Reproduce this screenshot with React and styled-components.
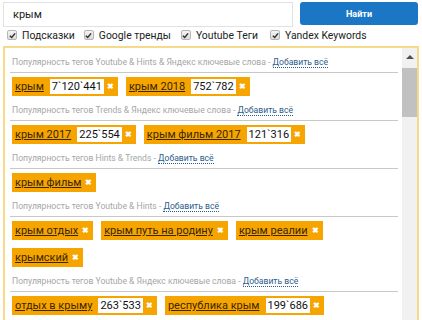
import React from "react"
import styled, { createGlobalStyle } from "styled-components"

const GlobalStyle = createGlobalStyle`
    body {
        margin: 0;
        background: #fff;
        font-family: Roboto, "Liberation Sans", sans-serif;
        overflow: hidden;
    }
`

const Page = styled.div`
    width: 422px;
    height: 320px;
    overflow: hidden;
`

const SearchBar = styled.div`
    display: flex;
    align-items: flex-start;
    padding: 2px 4px 0 3px;
    gap: 7px;
`

const SearchInput = styled.div`
    flex: 1;
    height: 23px;
    border: 1px solid #e2e2e2;
    box-sizing: content-box;
    display: flex;
    align-items: center;
    padding-left: 9px;
    font-size: 11px;
    color: #222;
`

const SearchButton = styled.button`
    width: 118px;
    height: 23px;
    border: none;
    border-radius: 3px;
    background: #1b77c5;
    color: #fff;
    font-family: Roboto, "Liberation Sans", sans-serif;
    font-weight: bold;
    font-size: 9px;
    padding: 0;
`

const Options = styled.div`
    display: flex;
    align-items: center;
    height: 14px;
    margin-top: 1px;
    padding-left: 7px;
    font-size: 10.4px;
    color: #222;
    white-space: nowrap;
`

const Option = styled.label`
    display: flex;
    align-items: center;
    margin-right: ${props => props.gap || 9}px;
`

const Box = styled.span`
    width: 8px;
    height: 8px;
    border: 1px solid #b5b5b5;
    border-radius: 2px;
    background: linear-gradient(#f4f4f4, #dcdcdc);
    display: inline-flex;
    align-items: center;
    justify-content: center;
    margin-right: 5px;
`

const Panel = styled.div`
    margin: 4px 3px 0 3px;
    border: 2px solid #f7d98a;
    display: flex;
    height: 300px;
`

const Content = styled.div`
    flex: 1;
    padding: 7px 4px 0 5px;
`

const Scrollbar = styled.div`
    width: 15px;
    background: #f1f1f1;
    display: flex;
    flex-direction: column;
    align-items: center;
`

const ScrollArrow = styled.div`
    width: 0;
    height: 0;
    border-left: 4px solid transparent;
    border-right: 4px solid transparent;
    border-bottom: 4px solid #505050;
    margin-top: 7px;
`

const Thumb = styled.div`
    width: 15px;
    height: 49px;
    margin-top: 9px;
    background: #c1c1c1;
`

const SectionHeader = styled.div`
    font-size: 8.6px;
    line-height: 14px;
    color: #a6a6a6;
    padding: 0 0 3px 2px;
    border-bottom: 1px solid #c8c8c8;
    white-space: nowrap;
`

const AddAll = styled.span`
    color: #2b5d8a;
    border-bottom: 1px dotted #2b5d8a;
`

const Tags = styled.div`
    display: flex;
    flex-wrap: wrap;
    gap: 8px 8px;
    padding: 4px 0 7px 2px;
`

const Tag = styled.div`
    height: 19px;
    display: flex;
    align-items: center;
    background: #f6a500;
    padding: 0 4px 0 3px;
    font-size: 11px;
`

const TagText = styled.span`
    color: #3a2600;
    text-decoration: underline;
    margin-right: ${props => props.hasCount ? 6 : 4}px;
`

const Count = styled.span`
    background: #fff;
    color: #111;
    height: 15px;
    line-height: 15px;
    padding: 0 2px;
    margin-right: 3px;
`

const Remove = styled.span`
    color: #fff;
    font-weight: bold;
    font-size: 8px;
    line-height: 1;
`

const sections = [
    {
        title: "Популярность тегов Youtube & Hints & Яндекс ключевые слова",
        tags: [["крым", "7`120`441"], ["крым 2018", "752`782"]],
    },
    {
        title: "Популярность тегов Trends & Яндекс ключевые слова",
        tags: [["крым 2017", "225`554"], ["крым фильм 2017", "121`316"]],
    },
    {
        title: "Популярность тегов Hints & Trends",
        tags: [["крым фильм"]],
    },
    {
        title: "Популярность тегов Youtube & Hints",
        tags: [["крым отдых"], ["крым путь на родину"], ["крым реалии"], ["крымский"]],
    },
    {
        title: "Популярность тегов Youtube & Яндекс ключевые слова",
        tags: [["отдых в крыму", "263`533"], ["республика крым", "199`686"]],
    },
]

const Check = () => (
    <Box>
        <svg width="7" height="7" viewBox="0 0 8 8">
            <path d="M1 4.2 L3.1 6.3 L7 1.6" fill="none" stroke="#333" strokeWidth="1.7" />
        </svg>
    </Box>
)

const App = () => {
    return (
        <Page>
            <GlobalStyle />
            <SearchBar>
                <SearchInput>крым</SearchInput>
                <SearchButton>Найти</SearchButton>
            </SearchBar>
            <Options>
                <Option gap={9}><Check />Подсказки</Option>
                <Option gap={10}><Check />Google тренды</Option>
                <Option gap={12}><Check />Youtube Теги</Option>
                <Option><Check />Yandex Keywords</Option>
            </Options>
            <Panel>
                <Content>
                    {sections.map(s => (
                        <div key={s.title}>
                            <SectionHeader>
                                {s.title} - <AddAll>Добавить всё</AddAll>
                            </SectionHeader>
                            <Tags>
                                {s.tags.map(([name, count]) => (
                                    <Tag key={name}>
                                        <TagText hasCount={!!count}>{name}</TagText>
                                        {count && <Count>{count}</Count>}
                                        <Remove>✖</Remove>
                                    </Tag>
                                ))}
                            </Tags>
                        </div>
                    ))}
                </Content>
                <Scrollbar>
                    <ScrollArrow />
                    <Thumb />
                </Scrollbar>
            </Panel>
        </Page>
    )
}

export default App
